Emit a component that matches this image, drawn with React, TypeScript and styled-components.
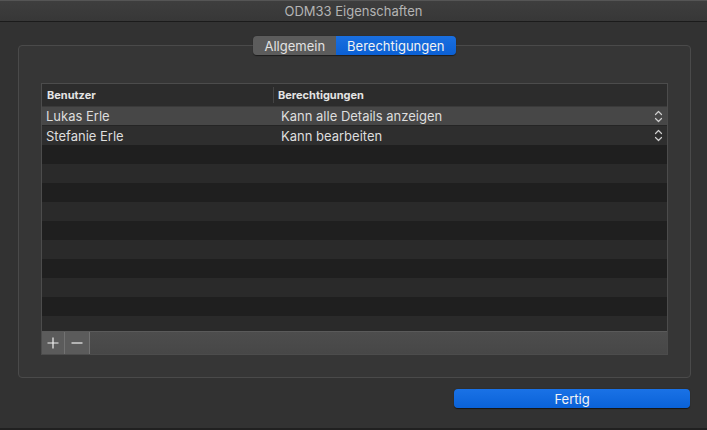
import React from "react";
import styled, { createGlobalStyle } from "styled-components";

const Global = createGlobalStyle`
  html, body { margin: 0; padding: 0; background: #323232; }
  body { font-family: "Inter", "Roboto", "Liberation Sans", sans-serif; -webkit-font-smoothing: antialiased; }
`;

const Window = styled.div`
  width: 707px;
  height: 430px;
  background: #323232;
  display: flex;
  flex-direction: column;
  box-sizing: border-box;
  border-bottom: 2px solid #202020;
  overflow: hidden;
`;

const TitleBar = styled.div`
  height: 22px;
  flex: none;
  box-sizing: border-box;
  background: linear-gradient(#3e3e3e, #373737);
  border-top: 1px solid #555;
  border-bottom: 1px solid #1b1b1b;
  display: flex;
  align-items: center;
  justify-content: center;
  color: #b4b4b4;
  font-size: 13px;
`;

const Body = styled.div`
  flex: 1;
  display: flex;
  flex-direction: column;
  padding: 23px 16px 0 18px;
`;

const GroupBox = styled.div`
  height: 333px;
  box-sizing: border-box;
  border: 1px solid #4a4a4a;
  border-radius: 4px;
  background: #363636;
  display: flex;
  flex-direction: column;
  padding: 0 22px 22px 22px;
`;

const TabRow = styled.div`
  display: flex;
  justify-content: center;
  margin-top: -10px;
  height: 19px;
`;

const Segmented = styled.div`
  display: flex;
  border-radius: 4px;
  overflow: hidden;
  height: 19px;
  box-shadow: 0 0.5px 1px rgba(0,0,0,0.5);
`;

const Segment = styled.div<{ $active?: boolean }>`
  display: flex;
  align-items: center;
  justify-content: center;
  padding: 0 11px;
  font-size: 13px;
  color: ${(p) => (p.$active ? "#f2f2f2" : "#e2e2e2")};
  background: ${(p) => (p.$active ? "linear-gradient(#1a6fe0, #0b60d4)" : "#5c5c5c")};
`;

const Table = styled.div`
  margin-top: 28px;
  flex: 1;
  display: flex;
  flex-direction: column;
  border: 1px solid #4c4c4c;
  background: #1e1e1e;
  overflow: hidden;
`;

const HeaderRow = styled.div`
  height: 22px;
  flex: none;
  display: grid;
  grid-template-columns: 231px 1fr;
  background: #2c2c2c;
  border-bottom: 1px solid #3a3a3a;
`;

const HeaderCell = styled.div<{ $sep?: boolean }>`
  display: flex;
  align-items: center;
  padding-left: ${(p) => (p.$sep ? "4px" : "5px")};
  font-size: 11px;
  font-weight: 700;
  color: #e4e4e4;
  border-left: ${(p) => (p.$sep ? "1px solid #444" : "none")};
  margin: ${(p) => (p.$sep ? "3px 0" : "0")};
`;

const Rows = styled.div`
  flex: 1;
  overflow: hidden;
`;

const Row = styled.div<{ $bg: string }>`
  height: 19px;
  display: grid;
  grid-template-columns: 231px 1fr;
  background: ${(p) => p.$bg};
  border-bottom: ${(p) => (p.$bg === "#474747" ? "1px solid #252525" : "none")};
  box-sizing: border-box;
`;

const Cell = styled.div`
  display: flex;
  align-items: center;
  padding-left: 4px;
  font-size: 13px;
  color: #dedede;
  white-space: nowrap;
`;

const PopupCell = styled(Cell)`
  justify-content: space-between;
  padding-left: 8px;
  padding-right: 4px;
`;

const Stepper = styled.svg`
  width: 9px;
  height: 13px;
  flex: none;
`;

const BottomBar = styled.div`
  height: 23px;
  flex: none;
  display: flex;
  background: linear-gradient(#4d4d4d, #474747);
  border-top: 1px solid #5a5a5a;
  box-sizing: border-box;
`;

const SmallButton = styled.div<{ $w: number }>`
  width: ${(p) => p.$w}px;
  height: 100%;
  display: flex;
  align-items: center;
  justify-content: center;
  background: #5b5b5b;
  border-right: 1px solid #727272;
`;

const Footer = styled.div`
  display: flex;
  justify-content: flex-end;
  padding-top: 11px;
  padding-right: 1px;
`;

const DoneButton = styled.button`
  width: 236px;
  height: 19px;
  border: none;
  border-radius: 4px;
  background: linear-gradient(#1a72e6, #0a62d8);
  color: #f4f4f4;
  font-family: inherit;
  font-size: 13px;
  padding: 0;
  box-shadow: 0 0.5px 1px rgba(0,0,0,0.6);
`;

const users = [
  { name: "Lukas Erle", perm: "Kann alle Details anzeigen" },
  { name: "Stefanie Erle", perm: "Kann bearbeiten" },
];

const bgFor = (i: number) => {
  if (i === 0) return "#474747";
  if (i === 1) return "#2e2e2e";
  return i % 2 === 0 ? "#1f1f1f" : "#2a2a2a";
};

const StepIcon = () => (
  <Stepper viewBox="0 0 9 13">
    <path d="M1.5 4.5 L4.5 1.5 L7.5 4.5" fill="none" stroke="#cfcfcf" strokeWidth="1.2" strokeLinecap="round" strokeLinejoin="round" />
    <path d="M1.5 8.5 L4.5 11.5 L7.5 8.5" fill="none" stroke="#cfcfcf" strokeWidth="1.2" strokeLinecap="round" strokeLinejoin="round" />
  </Stepper>
);

export default function App() {
  const rows = Array.from({ length: 13 }, (_, i) => i);
  return (
    <>
      <Global />
      <Window>
        <TitleBar>ODM33 Eigenschaften</TitleBar>
        <Body>
          <GroupBox>
            <TabRow>
              <Segmented>
                <Segment>Allgemein</Segment>
                <Segment $active>Berechtigungen</Segment>
              </Segmented>
            </TabRow>
            <Table>
              <HeaderRow>
                <HeaderCell>Benutzer</HeaderCell>
                <HeaderCell $sep>Berechtigungen</HeaderCell>
              </HeaderRow>
              <Rows>
                {rows.map((i) => (
                  <Row key={i} $bg={bgFor(i)}>
                    {users[i] ? (
                      <>
                        <Cell>{users[i].name}</Cell>
                        <PopupCell>
                          <span>{users[i].perm}</span>
                          <StepIcon />
                        </PopupCell>
                      </>
                    ) : null}
                  </Row>
                ))}
              </Rows>
              <BottomBar>
                <SmallButton $w={22}>
                  <svg width="12" height="12" viewBox="0 0 12 12">
                    <path d="M6 0.5 V11.5 M0.5 6 H11.5" stroke="#f0f0f0" strokeWidth="1.2" />
                  </svg>
                </SmallButton>
                <SmallButton $w={24}>
                  <svg width="12" height="12" viewBox="0 0 12 12">
                    <path d="M0.5 6 H11.5" stroke="#f0f0f0" strokeWidth="1.2" />
                  </svg>
                </SmallButton>
              </BottomBar>
            </Table>
          </GroupBox>
          <Footer>
            <DoneButton>Fertig</DoneButton>
          </Footer>
        </Body>
      </Window>
    </>
  );
}
